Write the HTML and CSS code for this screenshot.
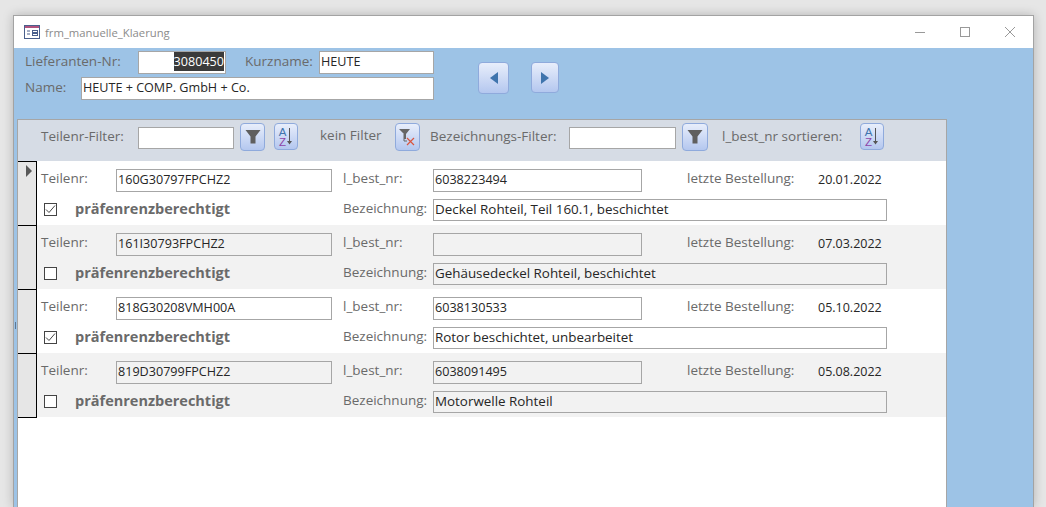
FILE: index.html
```html
<!DOCTYPE html>
<html lang="de">
  <head>
    <meta charset="UTF-8" />
    <title>frm_manuelle_Klaerung</title>
    <link rel="stylesheet" href="styles.css">
  </head>
  <body>
    <div class="window">
      <div class="titlebar">
        <svg class="formicon" width="16" height="14" viewBox="0 0 16 14">
          <rect x="0.5" y="0.5" width="15" height="13" fill="#fff" stroke="#4a5f8c"/>
          <rect x="1" y="1" width="14" height="2" fill="#b0527e"/>
          <path d="M3 6h3M3 9h3" stroke="#4a5f8c" fill="none"/>
          <rect x="8.5" y="5.5" width="5" height="2" fill="none" stroke="#4a5f8c"/>
          <rect x="8.5" y="8.5" width="5" height="2" fill="none" stroke="#4a5f8c"/>
        </svg>
        <span class="title">frm_manuelle_Klaerung</span>
        <div class="winbtns">
          <svg width="12" height="12" viewBox="0 0 12 12"><path d="M1 6.5h10" stroke="#999" fill="none"/></svg>
          <svg width="12" height="12" viewBox="0 0 12 12"><rect x="1.5" y="1.5" width="9" height="9" stroke="#999" fill="none"/></svg>
          <svg width="12" height="12" viewBox="0 0 12 12"><path d="M1 1l10 10M11 1L1 11" stroke="#999" fill="none"/></svg>
        </div>
      </div>
      <div class="content">
        <span class="stripmark"></span>
        <div class="head">
          <div class="headfields">
            <div class="headline">
              <span class="label lbl-lief">Lieferanten-Nr:</span>
              <span class="field f-nr"><span class="selected">3080450</span></span>
              <span class="label lbl-kurz">Kurzname:</span>
              <span class="field f-kurz">HEUTE</span>
            </div>
            <div class="headline">
              <span class="label lbl-name">Name:</span>
              <span class="field f-name">HEUTE + COMP. GmbH + Co.</span>
            </div>
          </div>
          <div class="nav">
            <button class="btn nav-prev">
              <svg width="10" height="14" viewBox="0 0 10 14"><path d="M9 1v12L1 7z" fill="#3f74ad"/></svg>
            </button>
            <button class="btn nav-next">
              <svg width="10" height="14" viewBox="0 0 10 14"><path d="M1 1v12l8-6z" fill="#3f74ad"/></svg>
            </button>
          </div>
        </div>

        <div class="form">
          <div class="filterbar">
            <span class="label w-tf">Teilenr-Filter:</span>
            <span class="field f-filter1"></span>
            <button class="btn btn-filter">
              <svg width="16" height="16" viewBox="0 0 16 16"><path d="M0.5 1h15L10.5 7.5v7h-5v-7z" fill="#5f5f5f"/></svg>
            </button>
            <button class="btn btn-sort">
              <span class="az"><b>A</b><i>Z</i></span>
              <svg width="7" height="17" viewBox="0 0 7 17"><path d="M3.5 0v14" stroke="#555" fill="none"/><path d="M1 13h5l-2.5 3.5z" fill="#555"/></svg>
            </button>
            <span class="label w-kein">kein Filter</span>
            <button class="btn btn-clear">
              <svg width="20" height="20" viewBox="0 0 20 20">
                <path d="M1 2h11L8 7v5H6V7z" fill="#666"/>
                <path d="M6 7v7h3" stroke="#666" fill="none"/>
                <path d="M9 11l7 7M16 11l-7 7" stroke="#d9553f" stroke-width="1.2" fill="none"/>
              </svg>
            </button>
            <span class="label w-bez">Bezeichnungs-Filter:</span>
            <span class="field f-filter2"></span>
            <button class="btn btn-filter btn-filter2">
              <svg width="16" height="16" viewBox="0 0 16 16"><path d="M0.5 1h15L10.5 7.5v7h-5v-7z" fill="#5f5f5f"/></svg>
            </button>
            <span class="label w-sort">l_best_nr sortieren:</span>
            <button class="btn btn-sort btn-sort2">
              <span class="az"><b>A</b><i>Z</i></span>
              <svg width="7" height="17" viewBox="0 0 7 17"><path d="M3.5 0v14" stroke="#555" fill="none"/><path d="M1 13h5l-2.5 3.5z" fill="#555"/></svg>
            </button>
          </div>

          <div class="rows">
            <div class="record">
              <div class="selector"><span class="pointer"></span></div>
              <div class="recordbody">
                <span class="label">Teilenr:</span>
                <span class="field">160G30797FPCHZ2</span>
                <span class="label lbl2">l_best_nr:</span>
                <span class="field">6038223494</span>
                <span class="label lbl3">letzte Bestellung:</span>
                <span class="date">20.01.2022</span>
                <span class="check"><span class="box"><svg width="11" height="11" viewBox="0 0 11 11"><path d="M1 5.5l3 3 6-7" stroke="#444" fill="none"/></svg></span><span class="label pref">präfenrenzberechtigt</span></span>
                <span class="label lbl2 bez">Bezeichnung:</span>
                <span class="field wide">Deckel Rohteil, Teil 160.1, beschichtet</span>
              </div>
            </div>
            <div class="record alt">
              <div class="selector"></div>
              <div class="recordbody">
                <span class="label">Teilenr:</span>
                <span class="field">161I30793FPCHZ2</span>
                <span class="label lbl2">l_best_nr:</span>
                <span class="field"></span>
                <span class="label lbl3">letzte Bestellung:</span>
                <span class="date">07.03.2022</span>
                <span class="check"><span class="box"></span><span class="label pref">präfenrenzberechtigt</span></span>
                <span class="label lbl2 bez">Bezeichnung:</span>
                <span class="field wide">Gehäusedeckel Rohteil, beschichtet</span>
              </div>
            </div>
            <div class="record">
              <div class="selector"></div>
              <div class="recordbody">
                <span class="label">Teilenr:</span>
                <span class="field">818G30208VMH00A</span>
                <span class="label lbl2">l_best_nr:</span>
                <span class="field">6038130533</span>
                <span class="label lbl3">letzte Bestellung:</span>
                <span class="date">05.10.2022</span>
                <span class="check"><span class="box"><svg width="11" height="11" viewBox="0 0 11 11"><path d="M1 5.5l3 3 6-7" stroke="#444" fill="none"/></svg></span><span class="label pref">präfenrenzberechtigt</span></span>
                <span class="label lbl2 bez">Bezeichnung:</span>
                <span class="field wide">Rotor beschichtet, unbearbeitet</span>
              </div>
            </div>
            <div class="record alt last">
              <div class="selector"></div>
              <div class="recordbody">
                <span class="label">Teilenr:</span>
                <span class="field">819D30799FPCHZ2</span>
                <span class="label lbl2">l_best_nr:</span>
                <span class="field">6038091495</span>
                <span class="label lbl3">letzte Bestellung:</span>
                <span class="date">05.08.2022</span>
                <span class="check"><span class="box"></span><span class="label pref">präfenrenzberechtigt</span></span>
                <span class="label lbl2 bez">Bezeichnung:</span>
                <span class="field wide">Motorwelle Rohteil</span>
              </div>
            </div>
          </div>
        </div>
      </div>
    </div>
  </body>
</html>
```

FILE: styles.css
```css
html,
body {
  margin: 0;
  height: 507px;
  overflow: hidden;
}
body {
  background: #e6e6e6;
  font-family: "Open Sans", "Noto Sans", sans-serif;
  font-size: 12.6px;
  color: #262626;
}
.window {
  box-sizing: border-box;
  margin: 15px 12px 0 13px;
  height: 492px;
  border: 1px solid #a3a3a3;
  border-bottom: 0;
  box-shadow: 0 0 10px rgba(0, 0, 0, 0.22);
  display: flex;
  flex-direction: column;
}
.titlebar {
  height: 32px;
  flex: none;
  background: #fff;
  display: flex;
  align-items: center;
  padding-left: 10px;
}
.formicon {
  margin-right: 5px;
}
.title {
  color: #8b8b8b;
  font-size: 11.3px;
}
.winbtns {
  margin-left: auto;
  margin-right: 17px;
  display: flex;
  gap: 33px;
}
.content {
  position: relative;
  flex: 1;
  background: #9dc3e6;
  padding-left: 3px;
  display: flex;
  flex-direction: column;
  min-height: 0;
}
.stripmark {
  position: absolute;
  left: 1px;
  top: 274px;
  width: 1px;
  height: 7px;
  background: #5b7896;
}
.label {
  color: #6a6a6a;
  font-size: 13.5px;
  line-height: 18px;
  white-space: nowrap;
}
.field {
  box-sizing: border-box;
  display: block;
  background: #fff;
  border: 1px solid #a6a6a6;
  height: 23px;
  line-height: 20px;
  padding-left: 1px;
  white-space: nowrap;
  overflow: hidden;
}

/* kopf */
.head {
  height: 71px;
  display: flex;
  flex: none;
}
.headfields {
  width: 417px;
  padding-top: 3px;
}
.headline {
  display: flex;
  align-items: flex-start;
  height: 23px;
  margin-bottom: 3px;
}
.headline .label {
  margin-top: 1px;
}
.lbl-lief {
  margin-left: 8px;
  width: 113px;
}
.f-nr {
  width: 88px;
  text-align: right;
  padding-right: 1px;
}
.selected {
  display: inline-block;
  height: 19px;
  line-height: 19px;
  background: #3b3b3b;
  color: #fff;
}
.lbl-kurz {
  margin-left: 19px;
  width: 74px;
}
.f-kurz {
  width: 115px;
}
.lbl-name {
  margin-left: 8px;
  width: 56px;
}
.f-name {
  width: 353px;
}
.nav {
  margin-left: 44px;
  padding-top: 14px;
  display: flex;
  align-items: flex-start;
  gap: 22px;
}
.btn {
  box-sizing: border-box;
  padding: 0;
  border: 1px solid #8faadc;
  border-radius: 4px;
  background: linear-gradient(#e8eefb, #b4c7ef);
  display: flex;
  align-items: center;
  justify-content: center;
}
.nav-prev {
  width: 31px;
  height: 32px;
}
.nav-next {
  width: 28px;
  height: 31px;
}

/* formular */
.form {
  flex: 1;
  width: 930px;
  box-sizing: border-box;
  background: #fff;
  border: 1px solid #a6a6a6;
  border-bottom: 0;
}
.filterbar {
  height: 41px;
  box-sizing: border-box;
  padding-top: 3px;
  background: #d6dce5;
  display: flex;
  align-items: flex-start;
}
.filterbar .label {
  margin-top: 4px;
}
.filterbar .field {
  margin-top: 4px;
  height: 22px;
}
.filterbar .w-tf {
  margin-left: 23px;
  width: 97px;
}
.f-filter1 {
  width: 96px;
}
.btn-filter {
  width: 25px;
  height: 28px;
  margin-left: 6px;
}
.btn-filter2 {
  width: 26px;
}
.btn-sort {
  width: 24px;
  height: 27px;
  gap: 0;
  margin-left: 9px;
}
.filterbar .w-kein {
  margin-left: 22px;
  margin-top: 3px;
  width: 75px;
}
.btn-clear {
  width: 25px;
  height: 28px;
}
.filterbar .w-bez {
  margin-left: 10px;
  width: 139px;
}
.f-filter2 {
  width: 107px;
}
.filterbar .w-sort {
  margin-left: 14px;
  width: 138px;
}
.btn-sort2 {
  margin-left: 0;
}
.az {
  display: flex;
  flex-direction: column;
  align-items: center;
  font-size: 11.5px;
  line-height: 10px;
}
.az b {
  font-weight: 400;
  color: #3f74ad;
}
.az i {
  font-style: normal;
  color: #8e44a8;
}

/* datensaetze */
.record {
  display: flex;
  height: 64px;
  background: #fff;
}
.record.alt {
  background: #f2f2f2;
}
.selector {
  box-sizing: border-box;
  width: 19px;
  flex: none;
  background: #e6e6e6;
  border-top: 1px solid #000;
  border-right: 1px solid #000;
  padding: 3px 0 0 8px;
}
.record.last .selector {
  height: 65px;
  border-bottom: 1px solid #000;
}
.pointer {
  display: block;
  width: 0;
  height: 0;
  border-left: 6px solid #595959;
  border-top: 6px solid transparent;
  border-bottom: 6px solid transparent;
}
.recordbody {
  flex: 1;
  display: grid;
  grid-template-columns: 75px 216px 101px 209px 176px 69px;
  grid-template-rows: 23px 22px;
  row-gap: 7px;
  padding: 8px 0 0 4px;
  align-items: start;
}
.record.alt .field {
  background: #f2f2f2;
}
.lbl2 {
  margin-left: 11px;
}
.lbl3 {
  margin-left: 45px;
}
.date {
  line-height: 21px;
  font-size: 12.5px;
}
.wide {
  grid-column: 4 / 7;
  height: 22px;
  line-height: 18px;
  font-size: 13.4px;
}
.check {
  grid-column: 1 / 3;
  display: flex;
  align-items: center;
  height: 20px;
  padding-left: 3px;
}
.box {
  box-sizing: border-box;
  width: 13px;
  height: 13px;
  border: 1px solid #444;
  background: #fff;
  display: flex;
  align-items: center;
  justify-content: center;
}
.pref {
  font-weight: 700;
  font-size: 14.5px;
  margin-left: 18px;
}
.bez {
  grid-column: 3;
}
```
